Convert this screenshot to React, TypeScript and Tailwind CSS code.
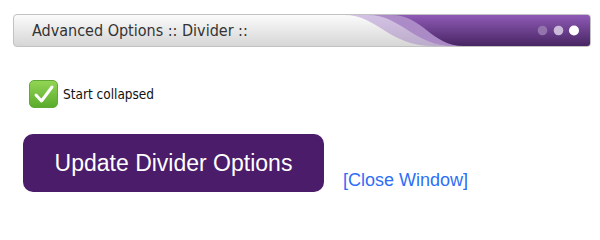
import React from "react";

function HeaderWave() {
  return (
    <svg
      className="absolute inset-0 h-full w-full"
      viewBox="0 0 576 31"
      preserveAspectRatio="none"
    >
      <defs>
        <linearGradient id="purp" x1="0" y1="0" x2="0" y2="1">
          <stop offset="0" stopColor="#8f5ab6" />
          <stop offset="1" stopColor="#472563" />
        </linearGradient>
        <linearGradient id="lav" x1="0" y1="0" x2="0" y2="1">
          <stop offset="0" stopColor="#cdb8e0" />
          <stop offset="1" stopColor="#b7a4c8" />
        </linearGradient>
      </defs>
      <path d="M330,0 C364,0 374,31 420,31 L576,31 L576,0 Z" fill="url(#lav)" opacity="0.85" />
      <path d="M354,0 C387,0 400,31 440,31 L576,31 L576,0 Z" fill="#a785c4" opacity="0.9" />
      <path d="M377,0 C409,0 417,31 450,31 L576,31 L576,0 Z" fill="url(#purp)" />
      <circle cx="528.5" cy="15.5" r="4.8" fill="#9373ae" />
      <circle cx="544.5" cy="15.5" r="4.8" fill="#cbb9da" />
      <circle cx="560" cy="15.5" r="5" fill="#ffffff" />
    </svg>
  );
}

export default function App() {
  return (
    <div className="w-[600px] h-[213px] bg-white overflow-hidden">
      <div className="relative ml-[13px] mt-[14px] h-[33px] w-[578px] overflow-hidden rounded-[4px] border border-[#c2c2c2] bg-linear-to-b from-[#fbfbfb] to-[#d6d6d6]">
        <HeaderWave />
        <div className="relative flex h-full items-center pl-[18px] font-['DejaVu_Sans_Condensed','DejaVu_Sans',sans-serif] text-[16px] text-[#333]">
          Advanced Options :: Divider ::
        </div>
      </div>

      <label className="ml-[29px] mt-[33px] flex items-center gap-[5px] font-['DejaVu_Sans_Condensed','DejaVu_Sans',sans-serif] text-[13.5px] text-[#111]">
        <span className="flex h-[28px] w-[29px] items-center justify-center rounded-[5px] border border-[#62a836] bg-linear-to-b from-[#93d555] to-[#5aab2b]">
          <svg width="22" height="20" viewBox="0 0 22 20">
            <path
              d="M3,11 L8.5,17 L19,3"
              fill="none"
              stroke="#ffffff"
              strokeWidth="3"
              strokeLinecap="round"
              strokeLinejoin="round"
            />
          </svg>
        </span>
        <span>Start collapsed</span>
      </label>

      <div className="ml-[23px] mt-[26px] flex items-end gap-[19px] font-['Liberation_Sans',Arial,sans-serif]">
        <button
          type="button"
          className="flex h-[58px] w-[301px] items-center justify-center rounded-[10px] bg-[#4a1c6a] text-[23px] text-white"
        >
          Update Divider Options
        </button>
        <a className="mb-[2px] text-[18px] leading-[20px] text-[#2e6ef7] cursor-pointer">
          [Close Window]
        </a>
      </div>
    </div>
  );
}
